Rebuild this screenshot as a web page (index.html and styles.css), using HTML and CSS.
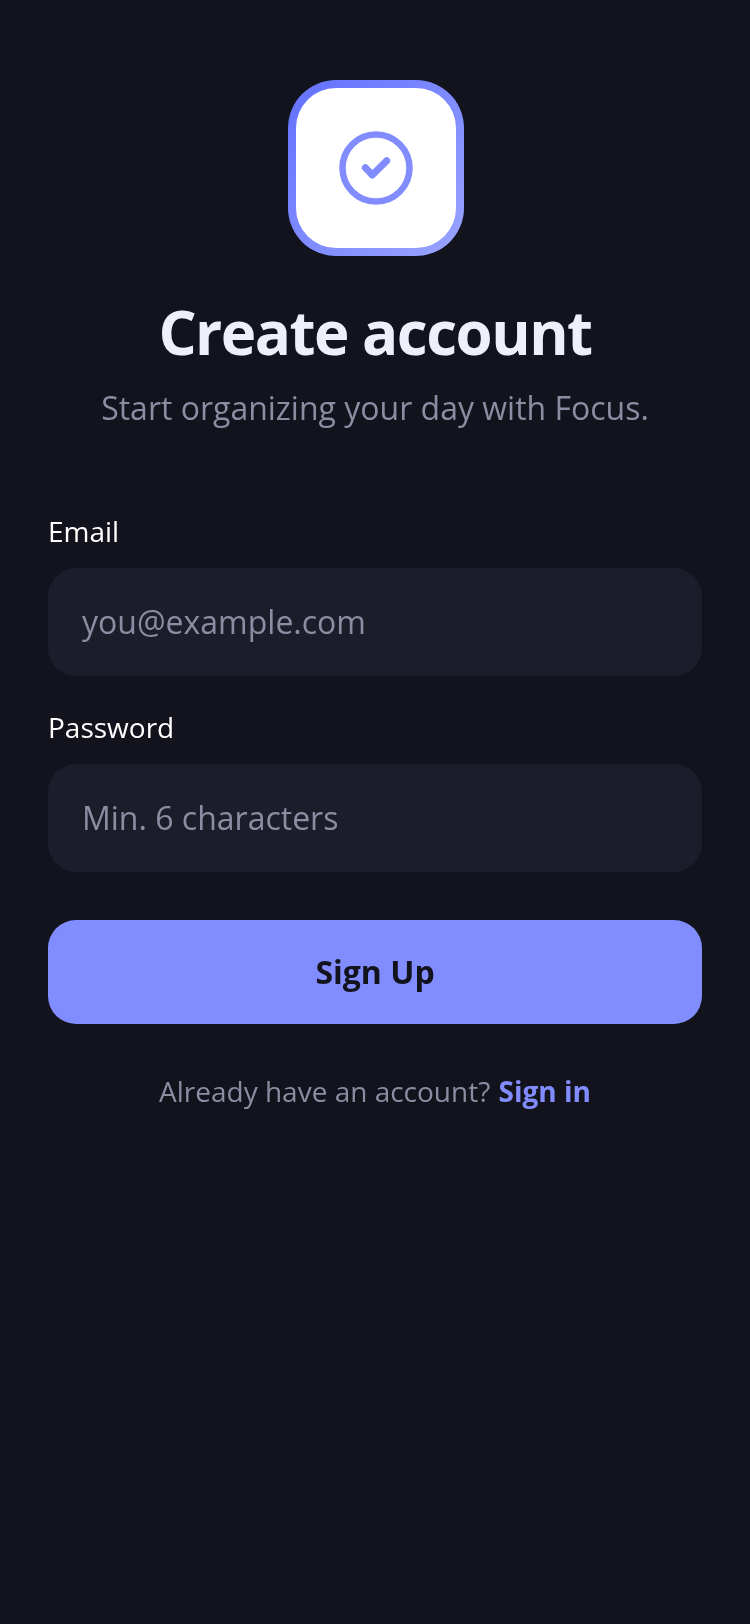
FILE: index.html
```html
<!DOCTYPE html>
<html lang="en">
<head>
<meta charset="utf-8">
<title>Create account</title>
<link rel="stylesheet" href="styles.css">
</head>
<body>
<main class="screen">
  <div class="logo">
    <div class="logo-inner">
      <svg class="logo-icon" width="76" height="76" viewBox="0 0 76 76" fill="none" aria-hidden="true">
        <circle cx="38" cy="38" r="33.5" stroke="#818cff" stroke-width="6.5"/>
        <path d="M27.3 37.7 L34.3 45 L48.7 30.7" stroke="#818cff" stroke-width="7" stroke-linecap="round" stroke-linejoin="round"/>
      </svg>
    </div>
  </div>
  <h1 class="title">Create account</h1>
  <p class="subtitle">Start organizing your day with Focus.</p>
  <form class="form">
    <div class="field">
      <div class="label">Email</div>
      <div class="input">you@example.com</div>
    </div>
    <div class="field">
      <div class="label">Password</div>
      <div class="input">Min. 6 characters</div>
    </div>
    <div class="button">Sign Up</div>
  </form>
  <p class="footer">Already have an account? <span class="link">Sign in</span></p>
</main>
</body>
</html>
```
FILE: styles.css
```css
* { box-sizing: border-box; }
html, body { margin: 0; height: 100%; }
body { background: #12131c; font-family: "Open Sans", sans-serif; }
.screen { display: flex; flex-direction: column; align-items: center; min-height: 1624px; padding: 80px 48px 0; will-change: transform; }
.logo { width: 176px; height: 176px; margin-left: 2px; padding: 8px; border-radius: 48px; background: linear-gradient(135deg, #6270ff, #9aa5ff); }
.logo-inner { width: 100%; height: 100%; border-radius: 40px; background: #fff; display: flex; align-items: center; justify-content: center; }
.logo-icon { display: block; }
.title { margin: 40px 0 0; font-size: 60px; line-height: 72px; font-weight: 700; letter-spacing: -1.5px; color: #eeeff8; }
.subtitle { margin: 18px 0 0; font-size: 32px; line-height: 44px; color: #8b8da2; }
.form { width: 100%; margin-top: 81px; display: flex; flex-direction: column; }
.field { display: flex; flex-direction: column; margin-bottom: 31px; }
.label { font-size: 28px; line-height: 40px; color: #fff; margin-bottom: 17px; }
.input { height: 108px; border-radius: 28px; padding: 0 34px 2px; background: #1b1e2a; color: #8b8da2; font-size: 32px; display: flex; align-items: center; }
.button { margin-top: 17px; height: 104px; padding-bottom: 2px; border-radius: 28px; background: #818cff; color: #12131c; font-size: 32px; font-weight: 700; display: flex; align-items: center; justify-content: center; }
.footer { margin: 47px 0 0; font-size: 28px; line-height: 40px; color: #8b8da2; }
.link { margin-left: 1px; color: #818cff; font-weight: 700; }
```
